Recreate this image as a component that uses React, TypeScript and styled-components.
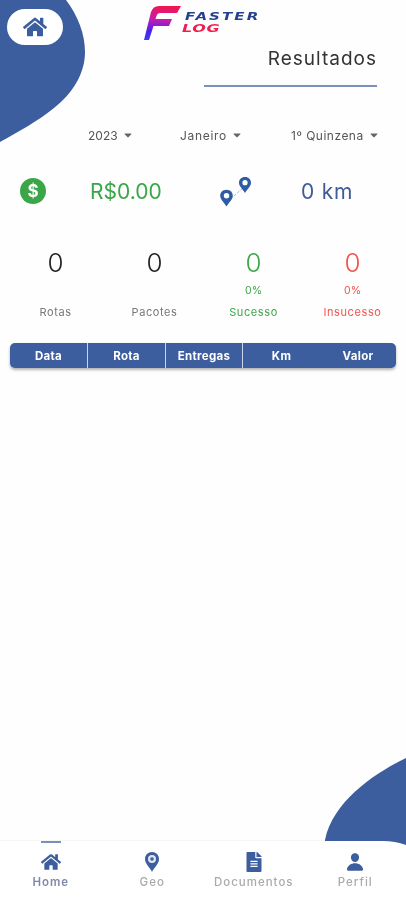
import { FC, ReactNode } from 'react'
import styled, { createGlobalStyle } from 'styled-components'
import { FaCaretDown, FaFileAlt, FaHome } from 'react-icons/fa'
import { IoPerson } from 'react-icons/io5'

const blue = '#3c5d9e'
const green = '#3aa648'
const red = '#f4504f'

const GlobalStyle = createGlobalStyle`
  html, body { margin: 0; padding: 0; background: #fff; }
  body { font-family: Inter, "Noto Sans", "Liberation Sans", sans-serif; color: #333; }
`

const Screen = styled.div`
  position: relative;
  display: flex;
  flex-direction: column;
  width: 406px;
  height: 900px;
  overflow: hidden;
  background: #fefefe;
  filter: blur(0.45px);
`

const TopBlob = styled.svg`
  position: absolute;
  top: 0;
  left: 0;
`

const BottomBlob = styled.svg`
  position: absolute;
  right: 0;
  top: 757px;
  z-index: 1;
`

const HomeButton = styled.button`
  position: absolute;
  top: 9px;
  left: 7px;
  display: flex;
  align-items: center;
  justify-content: center;
  width: 56px;
  height: 36px;
  padding: 0;
  border: 0;
  border-radius: 18px;
  background: #fff;
  color: ${blue};
  font-size: 24px;
`

const Main = styled.main`
  position: relative;
  flex: 1;
  display: flex;
  flex-direction: column;
`

const Logo = styled.div`
  display: flex;
  justify-content: flex-start;
  align-items: flex-start;
  height: 41px;
  padding: 5px 0 0 144px;
  box-sizing: border-box;
`

const LogoWords = styled.div`
  display: flex;
  flex-direction: column;
  align-items: flex-start;
  margin: 6px 0 0 3px;
  width: 82px;
  font-family: "DejaVu Sans", sans-serif;
  font-style: italic;
  font-weight: 700;
  font-size: 10px;
  line-height: 12px;
`

const LogoWord = styled.span<{ $red?: boolean }>`
  display: block;
  transform-origin: left center;
  transform: scaleX(${p => (p.$red ? 1.6 : 1.5)});
  margin-left: ${p => (p.$red ? -3 : 0)}px;
  color: ${p => (p.$red ? '#ee1f4f' : '#24408f')};
  letter-spacing: ${p => (p.$red ? 0.4 : 1.4)}px;
`

const TitleBlock = styled.div`
  align-self: flex-end;
  width: 173px;
  margin: 3px 29px 0 0;
  padding-bottom: 11px;
  border-bottom: 2px solid #7b91bd;
  text-align: right;
`

const Title = styled.h1`
  margin: 0;
  font-size: 19px;
  font-weight: 400;
  line-height: 30px;
  letter-spacing: 1px;
  color: #333;
`

const Filters = styled.div`
  display: flex;
  margin-top: 39px;
  height: 18px;
  padding-left: 88px;
  font-size: 12px;
  color: #555;
`

const Filter = styled.div<{ $width: number; $spacing: number }>`
  display: flex;
  align-items: center;
  gap: 4px;
  width: ${p => p.$width}px;
  letter-spacing: ${p => p.$spacing}px;
  white-space: nowrap;
  svg { color: #666; font-size: 12px; }
`

const Summary = styled.div`
  display: flex;
  align-items: center;
  margin-top: 27px;
  height: 40px;
  padding-left: 20px;
  font-size: 21px;
`

const SummaryValue = styled.span<{ $color: string; $width: number; $left: number; $spacing?: number }>`
  width: ${p => p.$width}px;
  margin-left: ${p => p.$left}px;
  color: ${p => p.$color};
  letter-spacing: ${p => p.$spacing ?? 0}px;
  white-space: nowrap;
`

const Stats = styled.div`
  display: grid;
  grid-template-columns: repeat(4, 99px);
  margin-top: 35px;
  padding-left: 6px;
`

const Stat = styled.div<{ $color?: string }>`
  display: grid;
  grid-template-rows: 32px 24px 20px;
  justify-items: center;
  align-items: center;
  color: ${p => p.$color ?? '#777'};
`

const StatNumber = styled.span<{ $color?: string }>`
  font-size: 26px;
  font-weight: 300;
  color: ${p => p.$color ?? '#222'};
`

const StatPercent = styled.span`
  font-size: 10.5px;
`

const StatLabel = styled.span`
  grid-row: 3;
  font-size: 11px;
  letter-spacing: 0.6px;
`

const TableHeader = styled.div`
  display: grid;
  grid-template-columns: 78px 78px 77px 77px 76px;
  margin: 21px 10px 0;
  height: 25px;
  border-radius: 5px;
  background: ${blue};
  box-shadow: 0 2px 3px rgba(0, 0, 0, 0.3);
`

const HeaderCell = styled.div<{ $last?: boolean }>`
  display: flex;
  align-items: center;
  justify-content: center;
  border-right: ${p => (p.$last ? 'none' : '1px solid #c9d4e8')};
  color: #fff;
  font-size: 11.5px;
  font-weight: 700;
  letter-spacing: 0.3px;
`

const Nav = styled.nav`
  position: relative;
  display: grid;
  grid-template-columns: repeat(4, 1fr);
  box-sizing: border-box;
  height: 60px;
  background: #fff;
  border-top: 1px solid #f6f6f6;
`

const NavItem = styled.div<{ $active?: boolean }>`
  position: relative;
  display: flex;
  flex-direction: column;
  align-items: center;
  padding-top: 11px;
  color: ${p => (p.$active ? '#8088a8' : '#aaa')};
  font-size: 11.5px;
  font-weight: ${p => (p.$active ? 600 : 500)};
  letter-spacing: 1px;
`

const NavIcon = styled.span`
  display: flex;
  align-items: center;
  justify-content: center;
  height: 20px;
  margin-bottom: 3px;
  color: ${blue};
  font-size: 20px;
`

const Indicator = styled.span`
  position: absolute;
  top: 0;
  left: 41px;
  width: 20px;
  height: 2px;
  background: #7d8fb8;
`

const FasterMark = () => (
  <svg width="38" height="36" viewBox="0 0 38 36">
    <defs>
      <linearGradient id="fmark" x1="0.4" y1="0" x2="0.3" y2="1">
        <stop offset="0" stopColor="#f0164f" />
        <stop offset="0.4" stopColor="#c41cb0" />
        <stop offset="0.75" stopColor="#4a22ee" />
        <stop offset="1" stopColor="#3a3cf0" />
      </linearGradient>
    </defs>
    <path
      d="M7 7 Q9 1 15 1 L37 1 L33 8 L16 8 Q13.500 8 12.500 11 L11.500 14 L28 14 L25 21 L9.500 21 L5 35 L0 35 Z"
      fill="url(#fmark)"
    />
  </svg>
)

const PinPath = ({ x, y, s }: { x: number; y: number; s: number }) => (
  <g transform={`translate(${x} ${y}) scale(${s})`}>
    <path
      d="M0 -6 C-3.800 -6 -6 -3.300 -6 -0.300 C-6 3.500 -1.800 6.500 0 10 C1.800 6.500 6 3.500 6 -0.300 C6 -3.300 3.800 -6 0 -6 Z"
      fill="#2f5ba4"
    />
    <circle r="2.600" cy="-0.300" fill="#fff" />
  </g>
)

const DollarIcon = () => (
  <svg width="26" height="26" viewBox="0 0 26 26">
    <circle cx="13" cy="13" r="13" fill={green} />
    <text x="13" y="19" textAnchor="middle" fontSize="17" fontWeight="700" fill="#fff" fontFamily="Inter, sans-serif">
      $
    </text>
  </svg>
)

const RouteIcon = () => (
  <svg width="34" height="34" viewBox="0 0 34 34">
    <path d="M9 28 L25 14" stroke="#a9b6d2" strokeWidth="1" strokeDasharray="3 1.500" fill="none" />
    <PinPath x={8.500} y={22} s={1.050} />
    <PinPath x={27} y={9} s={1} />
  </svg>
)

const GeoIcon = () => (
  <svg width="14" height="20" viewBox="0 0 14 20">
    <path d="M7 0 C3 0 0 3 0 7 C0 12 5 15.500 7 20 C9 15.500 14 12 14 7 C14 3 11 0 7 0 Z" fill={blue} />
    <circle cx="7" cy="7" r="4" fill="#dfe6f2" />
    <circle cx="7" cy="7" r="1.800" fill={blue} />
  </svg>
)

const FilterItem: FC<{ label: string; width: number; spacing: number }> = ({ label, width, spacing }) => (
  <Filter $width={width} $spacing={spacing}>
    {label}
    <FaCaretDown />
  </Filter>
)

const StatItem: FC<{ value: string; label: string; percent?: string; color?: string }> = ({
  value,
  label,
  percent,
  color,
}) => (
  <Stat $color={color}>
    <StatNumber $color={color}>{value}</StatNumber>
    {percent && <StatPercent>{percent}</StatPercent>}
    <StatLabel>{label}</StatLabel>
  </Stat>
)

const NavEntry: FC<{ icon: ReactNode; label: string; active?: boolean }> = ({ icon, label, active }) => (
  <NavItem $active={active}>
    {active && <Indicator />}
    <NavIcon>{icon}</NavIcon>
    {label}
  </NavItem>
)

const columns = ['Data', 'Rota', 'Entregas', 'Km', 'Valor']

export default function App() {
  return (
    <Screen>
      <GlobalStyle />
      <TopBlob width="90" height="145" viewBox="0 0 90 145">
        <path d="M0 0 L66 0 C78 16 85 34 85 52 C85 74 72 94 54 108 C38 121 18 132 0 142 Z" fill={blue} />
      </TopBlob>
      <BottomBlob width="81" height="90" viewBox="0 0 81 90">
        <path d="M81 1 C50 16 8 44 0 83 L0 84 L58 84 Q70 84 81 88 Z" fill={blue} />
      </BottomBlob>
      <Main>
        <Logo>
          <FasterMark />
          <LogoWords>
            <LogoWord>FASTER</LogoWord>
            <LogoWord $red>LOG</LogoWord>
          </LogoWords>
        </Logo>
        <TitleBlock>
          <Title>Resultados</Title>
        </TitleBlock>
        <Filters>
          <FilterItem label="2023" width={92} spacing={0} />
          <FilterItem label="Janeiro" width={111} spacing={0.7} />
          <FilterItem label="1º Quinzena" width={90} spacing={0.5} />
        </Filters>
        <Summary>
          <DollarIcon />
          <SummaryValue $color={green} $left={44} $width={128}>R$0.00</SummaryValue>
          <RouteIcon />
          <SummaryValue $color="#3f5a98" $left={49} $width={60} $spacing={0.8}>0 km</SummaryValue>
        </Summary>
        <Stats>
          <StatItem value="0" label="Rotas" />
          <StatItem value="0" label="Pacotes" />
          <StatItem value="0" percent="0%" label="Sucesso" color={green} />
          <StatItem value="0" percent="0%" label="Insucesso" color={red} />
        </Stats>
        <TableHeader>
          {columns.map((name, i) => (
            <HeaderCell key={name} $last={i >= columns.length - 2}>{name}</HeaderCell>
          ))}
        </TableHeader>
      </Main>
      <HomeButton aria-label="Home"><FaHome /></HomeButton>
      <Nav>
        <NavEntry active icon={<FaHome />} label="Home" />
        <NavEntry icon={<GeoIcon />} label="Geo" />
        <NavEntry icon={<FaFileAlt />} label="Documentos" />
        <NavEntry icon={<IoPerson />} label="Perfil" />
      </Nav>
    </Screen>
  )
}
